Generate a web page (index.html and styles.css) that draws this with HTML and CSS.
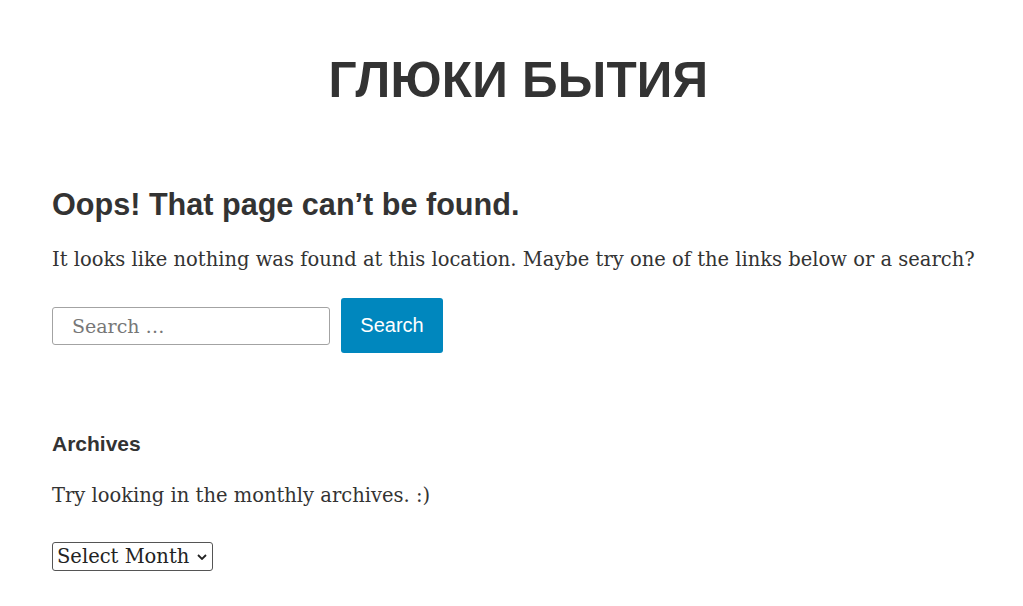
FILE: index.html
```html
<!DOCTYPE html>
<html lang="en">
<head>
<meta charset="utf-8">
<title>Page not found – ГЛЮКИ БЫТИЯ</title>
<link rel="stylesheet" href="styles.css">
</head>
<body>
<header class="site-header">
  <h1 class="site-title">ГЛЮКИ БЫТИЯ</h1>
</header>
<main class="content">
  <section class="not-found">
    <h2 class="page-title">Oops! That page can’t be found.</h2>
    <p class="lead">It looks like nothing was found at this location. Maybe try one of the links below or a search?</p>
    <form class="search-form">
      <input class="search-field" type="search" placeholder="Search …">
      <button class="search-submit" type="button">Search</button>
    </form>
    <div class="widget">
      <h3 class="widget-title">Archives</h3>
      <p class="widget-text">Try looking in the monthly archives. :)</p>
      <select class="month-select">
        <option>Select Month</option>
      </select>
    </div>
  </section>
</main>
</body>
</html>
```
FILE: styles.css
```css
* { box-sizing: border-box; }
html, body { margin: 0; padding: 0; background: #fff; }
body {
  color: #333;
  font-family: "DejaVu Serif", Georgia, serif;
  width: 1023px;
  height: 606px;
  overflow: hidden;
}
.site-header {
  display: flex;
  justify-content: center;
  padding: 50px 0 0 14px;
}
.site-title {
  margin: 0;
  font-family: "Liberation Sans", Arial, sans-serif;
  font-weight: 700;
  font-size: 49.5px;
  line-height: 60px;
  color: #333;
  letter-spacing: 0.2px;
}
.content {
  padding: 0 20px 0 52px;
}
.page-title {
  margin: 75px 0 0;
  font-family: "Liberation Sans", Arial, sans-serif;
  font-weight: 700;
  font-size: 30.6px;
  line-height: 38px;
}
.lead {
  margin: 22px 0 0;
  font-size: 19.5px;
  line-height: 30px;
  white-space: nowrap;
}
.search-form {
  display: flex;
  align-items: center;
  gap: 11px;
  margin-top: 23px;
}
.search-field {
  width: 278px;
  height: 38px;
  border: 1px solid #a3a3a3;
  border-radius: 3px;
  padding: 0 19px;
  font-family: "DejaVu Serif", Georgia, serif;
  font-size: 19px;
  color: #333;
  outline: none;
}
.search-field::placeholder { color: #777; }
.search-submit {
  width: 102px;
  height: 55px;
  border: none;
  border-radius: 3px;
  background: #0087be;
  color: #fff;
  font-family: "Liberation Sans", Arial, sans-serif;
  font-size: 20px;
  padding: 0;
}
.widget { margin-top: 79px; }
.widget-title {
  margin: 0;
  font-family: "Liberation Sans", Arial, sans-serif;
  font-weight: 700;
  font-size: 21px;
  line-height: 24px;
}
.widget-text {
  margin: 25px 0 0;
  font-size: 19.5px;
  line-height: 30px;
}
.month-select {
  display: block;
  margin-top: 31px;
  appearance: none;
  -webkit-appearance: none;
  height: 29px;
  width: 161px;
  border: 1px solid #555;
  border-radius: 3px;
  padding: 0 20px 0 4px;
  background: #fff url("data:image/svg+xml,%3Csvg xmlns='http://www.w3.org/2000/svg' width='10' height='6' viewBox='0 0 10 6'%3E%3Cpath d='M1 1l4 4 4-4' fill='none' stroke='%23222' stroke-width='1.8'/%3E%3C/svg%3E") no-repeat right 5px center;
  font-family: "DejaVu Serif", Georgia, serif;
  font-size: 19.5px;
  color: #222;
}
```
